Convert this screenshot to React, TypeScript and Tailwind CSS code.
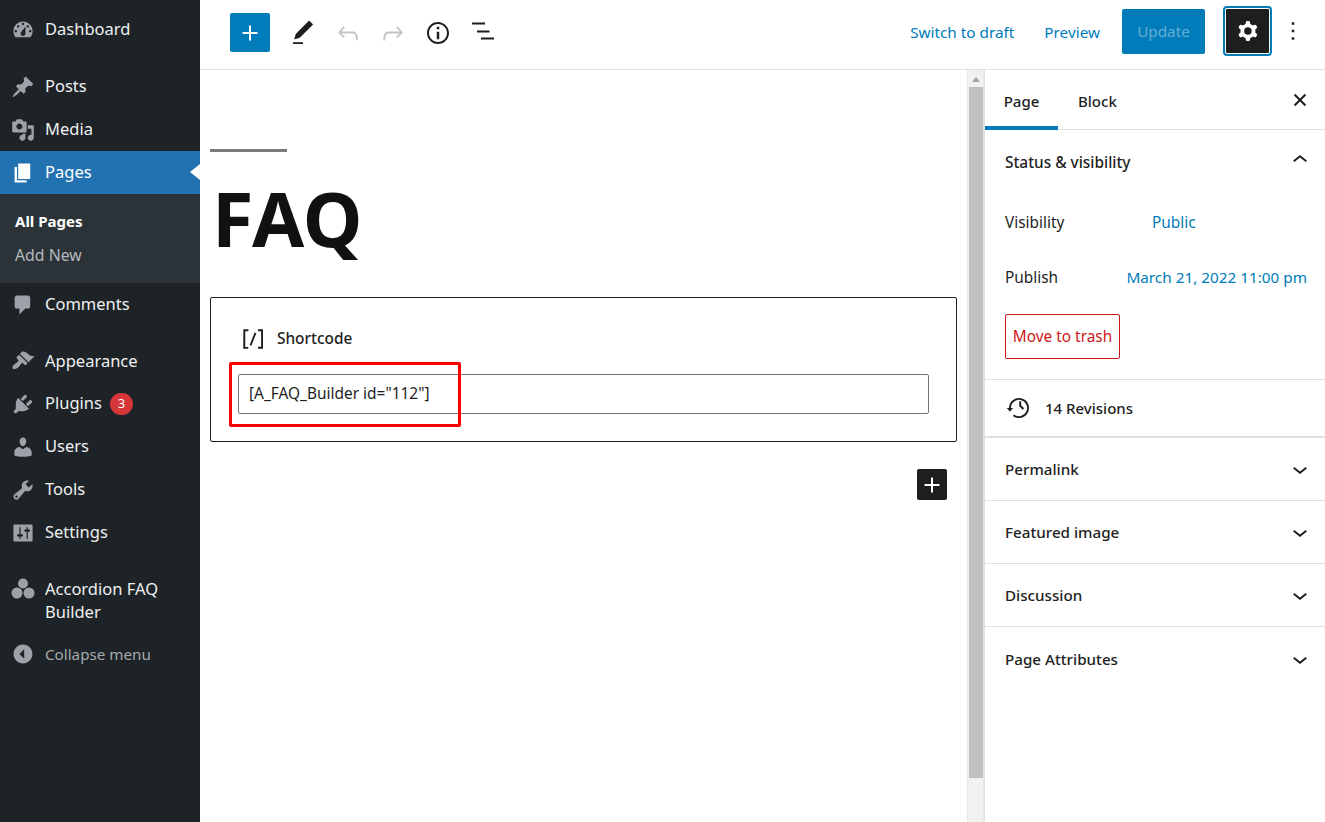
import React from "react";

const font = { fontFamily: '"Noto Sans", "Open Sans", sans-serif' };

const Dash = ({ d, className = "" }: { d: string; className?: string }) => (
  <svg viewBox="0 0 20 20" className={`w-6 h-6 shrink-0 fill-[#9ca2a7] ${className}`}>
    <path d={d} fillRule="evenodd" />
  </svg>
);
const Wp = ({ d, className = "" }: { d: string; className?: string }) => (
  <svg viewBox="0 0 24 24" className={`w-[30px] h-[30px] shrink-0 ${className}`}>
    <path d={d} fillRule="evenodd" />
  </svg>
);

const icons = {
  dashboard:
    "M3.76 16h12.48c1.1-1.37 1.76-3.11 1.76-5 0-4.42-3.58-8-8-8s-8 3.58-8 8c0 1.89.66 3.63 1.76 5zM10 4c.55 0 1 .45 1 1s-.45 1-1 1-1-.45-1-1 .45-1 1-1zM6 6c.55 0 1 .45 1 1s-.45 1-1 1-1-.45-1-1 .45-1 1-1zm8 0c.55 0 1 .45 1 1s-.45 1-1 1-1-.45-1-1 .45-1 1-1zm-5.37 5.55L12 7v6c0 1.1-.9 2-2 2s-2-.9-2-2c0-.57.24-1.08.63-1.45zM4 10c.55 0 1 .45 1 1s-.45 1-1 1-1-.45-1-1 .45-1 1-1zm12 0c.55 0 1 .45 1 1s-.45 1-1 1-1-.45-1-1 .45-1 1-1z",
  pin: "M10.44 3.02l1.82-1.82 6.36 6.35-1.83 1.82c-1.05-.68-2.48-.57-3.41.36l-.75.75c-.92.93-1.04 2.35-.35 3.41l-1.83 1.82-2.41-2.41-2.8 2.79c-.42.42-3.38 2.71-3.8 2.29s1.86-3.39 2.28-3.81l2.79-2.79L4.1 9.36l1.83-1.82c1.05.69 2.48.57 3.4-.36l.75-.75c.93-.92 1.05-2.35.36-3.41z",
  media:
    "M13 11V4c0-.55-.45-1-1-1h-1.67L9 1H5L3.67 3H2c-.55 0-1 .45-1 1v7c0 .55.45 1 1 1h10c.55 0 1-.45 1-1zM7 4.5c1.38 0 2.5 1.12 2.5 2.5S8.38 9.5 7 9.5 4.5 8.38 4.5 7 5.62 4.5 7 4.5zM14 6h5v10.5c0 1.38-1.12 2.5-2.5 2.5S14 17.88 14 16.5s1.12-2.5 2.5-2.5c.17 0 .34.02.5.05V9h-3V6zm-4 8.05V13h2v3.5c0 1.38-1.12 2.5-2.5 2.5S7 17.88 7 16.5 8.12 14 9.5 14c.17 0 .34.02.5.05z",
  page: "M6 15V2h10v13H6zm-1 1h8v2H3V5h2v11z",
  comments: "M5 2h9c1.1 0 2 .9 2 2v7c0 1.1-.9 2-2 2h-2l-5 5v-5H5c-1.1 0-2-.9-2-2V4c0-1.1.9-2 2-2z",
  appearance:
    "M14.48 11.06L7.41 3.99l1.5-1.5c.5-.56 2.3-.47 3.51.32 1.21.8 1.43 1.28 2.91 2.1 1.18.64 2.45 1.26 4.45.85zm-.71.71L6.7 4.7 4.93 6.47c-.39.39-.39 1.02 0 1.41l1.06 1.06c.39.39.39 1.03 0 1.42-.6.6-1.43 1.11-2.21 1.69-.35.26-.7.53-1.01.84C1.43 13.23.78 15.6 1.65 16.4c.87.8 3.24.16 4.58-1.15.31-.31.58-.66.85-1.01.57-.78 1.08-1.61 1.69-2.21.39-.39 1.02-.39 1.41 0l1.06 1.06c.39.39 1.02.39 1.41 0z",
  plugins:
    "M13.11 4.36L9.87 7.6 8 5.73l3.24-3.24c.35-.34 1.05-.2 1.56.32.52.51.66 1.21.31 1.55zm-8 1.77l.91-1.12 9.01 9.01-1.19.84c-.71.71-2.63 1.16-3.82 1.16H6.14L4.9 17.26c-.59.59-1.54.59-2.12 0-.59-.58-.59-1.53 0-2.12l1.24-1.24v-3.88c0-1.13.4-3.19 1.09-3.89zm7.26 3.97l3.24-3.24c.34-.35 1.04-.21 1.55.31.52.51.66 1.21.31 1.55l-3.24 3.25z",
  users:
    "M10 9.25c-2.27 0-2.73-3.44-2.73-3.44C7 4.02 7.82 2 9.97 2c2.16 0 2.98 2.02 2.71 3.81 0 0-.41 3.44-2.68 3.44zm0 2.57L12.72 10c2.39 0 4.52 2.33 4.52 4.53v2.49s-3.65 1.13-7.24 1.13c-3.65 0-7.24-1.13-7.24-1.13v-2.49c0-2.25 1.94-4.48 4.47-4.48z",
  tools:
    "M16.68 9.77c-1.34 1.34-3.3 1.67-4.95.99l-5.41 6.52c-.99.99-2.59.99-3.58 0s-.99-2.59 0-3.57l6.52-5.42c-.68-1.65-.35-3.61.99-4.95 1.28-1.28 3.12-1.62 4.72-1.06l-2.89 2.89 2.82 2.82 2.86-2.87c.53 1.58.18 3.39-1.08 4.65zM3.81 16.21c.4.39 1.04.39 1.43 0 .4-.4.4-1.04 0-1.43-.39-.4-1.03-.4-1.43 0-.39.39-.39 1.03 0 1.43z",
  settings:
    "M18 16V4c0-.55-.45-1-1-1H3c-.55 0-1 .45-1 1v12c0 .55.45 1 1 1h14c.55 0 1-.45 1-1zM8 11h1c.55 0 1 .45 1 1s-.45 1-1 1H8v1.5c0 .28-.22.5-.5.5s-.5-.22-.5-.5V13H6c-.55 0-1-.45-1-1s.45-1 1-1h1V5.5c0-.28.22-.5.5-.5s.5.22.5.5V11zm5-2h-1c-.55 0-1-.45-1-1s.45-1 1-1h1V5.5c0-.28.22-.5.5-.5s.5.22.5.5V7h1c.55 0 1 .45 1 1s-.45 1-1 1h-1v5.5c0 .28-.22.5-.5.5s-.5-.22-.5-.5V9z",
  collapse:
    "M10 2.16c4.33 0 7.84 3.51 7.84 7.84s-3.51 7.84-7.84 7.84S2.16 14.33 2.16 10 5.67 2.16 10 2.16zM11 6l-4 4 4 4V6z",
};

const wp = {
  plus: "M18 11.2h-5.2V6h-1.6v5.2H6v1.6h5.2V18h1.6v-5.2H18z",
  edit: "M20.1 5.1L16.9 2 6.2 12.7l-1.3 4.4 4.5-1.3L20.1 5.1zM4 20.8h8v-1.5H4v1.5z",
  undo: "M18.3 11.7c-.6-.6-1.4-.9-2.3-.9H6.7l2.9-3.3-1.1-1-4.5 5L8.5 16l1-1-2.7-2.7H16c.5 0 .9.2 1.3.5 1 1 1 3.4 1 4.5v.5h1.5v-.5c0-1.5 0-4.3-1.5-5.8z",
  redo: "M15.6 6.5l-1.1 1 2.9 3.3H8c-.9 0-1.7.3-2.3.9-1.4 1.5-1.4 4.2-1.4 5.8v.5h1.5v-.6c0-1.1 0-3.5 1-4.5.3-.3.7-.5 1.3-.5h9.2L14.5 15l1 1.1 4.5-4.6-4.4-5z",
  info: "M12 3.2c-4.8 0-8.8 3.9-8.8 8.8 0 4.8 3.9 8.8 8.8 8.8 4.8 0 8.8-3.9 8.8-8.8 0-4.8-4-8.8-8.8-8.8zm0 16c-4 0-7.2-3.3-7.2-7.2C4.8 8 8 4.8 12 4.8s7.2 3.3 7.2 7.2c0 4-3.2 7.2-7.2 7.2zM11 17h2v-6h-2v6zm0-8h2V7h-2v2z",
  cog: "M10.289 4.836A1 1 0 0111.275 4h1.306a1 1 0 01.987.836l.244 1.466c.787.26 1.503.679 2.108 1.218l1.393-.522a1 1 0 011.216.437l.653 1.13a1 1 0 01-.23 1.273l-1.148.944a6.025 6.025 0 010 2.435l1.149.946a1 1 0 01.23 1.272l-.653 1.131a1 1 0 01-1.216.437l-1.394-.522c-.605.54-1.32.958-2.108 1.218l-.244 1.466a1 1 0 01-.987.836h-1.306a1 1 0 01-.986-.836l-.244-1.466a5.995 5.995 0 01-2.108-1.218l-1.394.522a1 1 0 01-1.217-.436l-.653-1.131a1 1 0 01.23-1.272l1.149-.946a6.026 6.026 0 010-2.435l-1.148-.944a1 1 0 01-.23-1.272l.653-1.131a1 1 0 011.217-.437l1.393.522a5.994 5.994 0 012.108-1.218l.244-1.466zM14.929 12a3 3 0 11-6 0 3 3 0 016 0z",
  more: "M13 19h-2v-2h2v2zm0-6h-2v-2h2v2zm0-6h-2V5h2v2z",
  up: "M6.5 12.4L12 8l5.5 4.4-.9 1.2L12 10l-4.5 3.6-1-1.2z",
  down: "M17.5 11.6L12 16l-5.5-4.4.9-1.2L12 14l4.5-3.6 1 1.2z",
  backup: "M5.5 12h1.75l-2.5 3-2.5-3H4a8 8 0 113.134 6.34l.907-1.194A6.5 6.5 0 105.5 12zm9.53 1.34l-2.83-2.83V6.5h1.5v3.38l2.39 2.4-1.06 1.06z",
  shortcode: "M16 4.2v1.5h2.5v12.5H16v1.5h4V4.2h-4zM4.2 19.8h4v-1.5H5.8V5.8h2.5V4.2h-4l-.1 15.6zm5.1-3.1l1.4.6 4-10-1.4-.6-4 10z",
};

function MenuItem({ icon, label, badge, h = "h-[43px]" }: { icon: string; label: string; badge?: string; h?: string }) {
  return (
    <div className={`${h} flex items-center pl-[11px] text-[#f0f0f1] text-[16.5px]`}>
      <Dash d={icon} />
      <span className="ml-[10px]">{label}</span>
      {badge && (
        <span className="ml-2 w-[23px] h-[22px] rounded-full bg-[#d63638] text-white text-[13px] flex items-center justify-center">
          {badge}
        </span>
      )}
    </div>
  );
}

function Sidebar() {
  return (
    <aside className="w-[200px] shrink-0 bg-[#1d2327] flex flex-col pt-[8px]">
      <MenuItem icon={icons.dashboard} label="Dashboard" />
      <div className="h-[14px]" />
      <MenuItem icon={icons.pin} label="Posts" />
      <MenuItem icon={icons.media} label="Media" />
      <div className="relative h-[43px] flex items-center pl-[11px] bg-[#2271b1] text-white text-[16.5px]">
        <Dash d={icons.page} className="fill-white" />
        <span className="ml-[10px]">Pages</span>
        <span className="absolute right-0 top-[13px] border-y-[8px] border-y-transparent border-r-[10px] border-r-white" />
      </div>
      <div className="h-[89px] bg-[#2c3338] flex flex-col pl-[15px] pt-[15px] text-[15px]">
        <span className="h-[24px] leading-[24px] font-bold text-white">All Pages</span>
        <span className="h-[24px] leading-[24px] mt-[10px] text-[15.8px] text-[#b4b9be]">Add New</span>
      </div>
      <MenuItem icon={icons.comments} label="Comments" />
      <div className="h-[14px]" />
      <MenuItem icon={icons.appearance} label="Appearance" h="h-[42px]" />
      <MenuItem icon={icons.plugins} label="Plugins" badge="3" />
      <MenuItem icon={icons.users} label="Users" />
      <MenuItem icon={icons.tools} label="Tools" />
      <MenuItem icon={icons.settings} label="Settings" />
      <div className="h-[23px]" />
      <div className="flex pl-[11px] text-[#f0f0f1] text-[16.5px] leading-[23px]">
        <svg viewBox="0 0 24 24" className="w-6 h-6 shrink-0 fill-[#9ca2a7]">
          <circle cx="12" cy="6.5" r="5" />
          <circle cx="6" cy="16" r="5.5" />
          <circle cx="18" cy="16" r="5.5" />
        </svg>
        <span className="ml-[10px] w-[140px]">Accordion FAQ Builder</span>
      </div>
      <div className="h-[32px] mt-[15px] flex items-center pl-[11px] text-[#a7aaad] text-[15.2px]">
        <Dash d={icons.collapse} />
        <span className="ml-[10px]">Collapse menu</span>
      </div>
    </aside>
  );
}

function Toolbar() {
  return (
    <header className="h-[70px] shrink-0 bg-white border-b border-[#e0e0e0] flex items-center pb-[4px]">
      <button className="ml-[30px] w-[40px] h-[39px] rounded-[2px] bg-[#007cba] flex items-center justify-center">
        <Wp d={wp.plus} className="fill-white" />
      </button>
      <Wp d={wp.edit} className="ml-[18px] fill-[#1e1e1e]" />
      <Wp d={wp.undo} className="ml-[15px] fill-[#c4c4c4]" />
      <Wp d={wp.redo} className="ml-[15px] fill-[#c4c4c4]" />
      <Wp d={wp.info} className="ml-[15px] fill-[#1e1e1e]" />
      <svg viewBox="0 0 30 30" className="ml-[15px] w-[30px] h-[30px] shrink-0 fill-[#1e1e1e]">
        <rect x="4" y="4.5" width="13" height="2" />
        <rect x="9" y="12.5" width="12.5" height="2" />
        <rect x="13" y="19.5" width="13" height="2" />
      </svg>
      <div className="ml-auto flex items-center">
        <span className="text-[#007cba] text-[15.3px]">Switch to draft</span>
        <span className="ml-[30px] text-[#007cba] text-[15.3px]">Preview</span>
        <button className="ml-[22px] -mt-[2px] w-[83px] h-[45px] rounded-[2px] bg-[#007cba] text-[#66aed4] text-[15.3px]">Update</button>
        <button className="ml-[18px] -mt-[3px] w-[49px] h-[50px] rounded-[4px] bg-white border-2 border-[#007cba] p-[1px]">
          <span className="w-full h-full rounded-[1px] bg-[#1e1e1e] flex items-center justify-center">
            <Wp d={wp.cog} className="fill-white" />
          </span>
        </button>
        <Wp d={wp.more} className="ml-[6px] mr-[17px] -mt-[3px] fill-[#1e1e1e]" />
      </div>
    </header>
  );
}

function Scrollbar() {
  return (
    <div className="w-[17px] shrink-0 bg-[#f1f1f1] border-x border-[#e8e8e8] flex flex-col items-center">
      <div className="mt-[7px] h-0 w-0 border-x-[4px] border-x-transparent border-b-[5px] border-b-[#a3a3a3]" />
      <div className="mt-[5px] w-[14px] h-[691px] bg-[#c1c1c1]" />
    </div>
  );
}

function Editor() {
  return (
    <main className="flex-1 min-w-0 bg-white flex">
      <div className="flex-1 min-w-0 px-[10px]">
        <div className="mt-[79px] w-[77px] h-[3px] bg-[#7b7b7b]" />
        <h1 className="mt-[18px] ml-[2px] h-[127px] text-[#111111] text-[75.5px] leading-[96px] font-bold">FAQ</h1>
        <div className="relative w-[747px] h-[145px] border border-[#1e1e1e] rounded-[2px] px-[27px] pt-[26px] bg-white">
          <div className="flex items-center h-[30px] text-[#1e1e1e] text-[15.4px] font-medium">
            <Wp d={wp.shortcode} className="fill-[#1e1e1e]" />
            <span className="ml-[9px]">Shortcode</span>
          </div>
          <div className="mt-[20px] h-[40px] border border-[#757575] rounded-[2px] px-[10px] flex items-center text-[#1e1e1e] text-[15.45px]">
            [A_FAQ_Builder id="112"]
          </div>
          <div className="absolute left-[18px] top-[64px] w-[232px] h-[65px] border-[3px] border-[#ff0000] rounded-[2px]" />
        </div>
        <div className="flex justify-end w-[737px] mt-[27px]">
          <button className="w-[30px] h-[31px] rounded-[2px] bg-[#1e1e1e] flex items-center justify-center">
            <Wp d={wp.plus} className="fill-white" />
          </button>
        </div>
      </div>
      <Scrollbar />
    </main>
  );
}

function Accordion({ label, last }: { label: string; last?: boolean }) {
  return (
    <div className={`h-[63px] ${last ? "" : "border-b border-[#e0e0e0]"} pl-[20px] pr-[10px] flex items-center justify-between text-[#1e1e1e] text-[15.2px] font-medium`}>
      <span className="pt-[1px]">{label}</span>
      <Wp d={wp.down} className="fill-[#1e1e1e]" />
    </div>
  );
}

function Panel() {
  return (
    <aside className="w-[341px] shrink-0 bg-white border-l border-[#e0e0e0] flex flex-col">
      <div className="h-[60px] border-b border-[#e0e0e0] flex items-center relative text-[#1e1e1e] text-[15px] font-medium">
        <div className="w-[73px] h-[60px] flex items-center justify-center border-b-[4px] border-[#007cba] pt-[8px]">Page</div>
        <span className="ml-[20px] pt-[4px]">Block</span>
        <svg viewBox="0 0 14 14" className="ml-auto mr-[18px] w-[14px] h-[14px] stroke-[#1e1e1e] stroke-2 fill-none">
          <path d="M1.500 1.500L12.500 12.500M12.500 1.500L1.500 12.500" />
        </svg>
      </div>
      <div className="h-[250px] border-b border-[#e0e0e0] px-[20px] text-[15.4px] text-[#1e1e1e] flex flex-col">
        <div className="h-[65px] flex items-center justify-between font-medium">
          <span>Status &amp; visibility</span>
          <Wp d={wp.up} className="-mr-[10px] -mt-[6px] fill-[#1e1e1e]" />
        </div>
        <div className="h-[55px] flex items-center">
          <span className="w-[147px]">Visibility</span>
          <span className="text-[#007cba]">Public</span>
        </div>
        <div className="h-[55px] flex items-center justify-between -mr-[2px]">
          <span>Publish</span>
          <span className="text-[#007cba] text-[15.3px]">March 21, 2022 11:00 pm</span>
        </div>
        <div className="mt-[9px] w-[115px] h-[45px] rounded-[2px] border border-[#cc1818] text-[#cc1818] flex items-center justify-center">
          Move to trash
        </div>
      </div>
      <div className="h-[58px] border-b-2 border-[#e0e0e0] pl-[19px] flex items-center text-[#1e1e1e] text-[15px] font-medium">
        <Wp d={wp.backup} className="fill-[#1e1e1e]" />
        <span className="ml-[11px]">14 Revisions</span>
      </div>
      <Accordion label="Permalink" />
      <Accordion label="Featured image" />
      <Accordion label="Discussion" />
      <Accordion label="Page Attributes" last />
    </aside>
  );
}

export default function App() {
  return (
    <div className="h-[822px] w-[1325px] flex overflow-hidden bg-white" style={font}>
      <Sidebar />
      <div className="flex-1 min-w-0 flex flex-col">
        <Toolbar />
        <div className="flex-1 min-h-0 flex">
          <Editor />
          <Panel />
        </div>
      </div>
    </div>
  );
}
